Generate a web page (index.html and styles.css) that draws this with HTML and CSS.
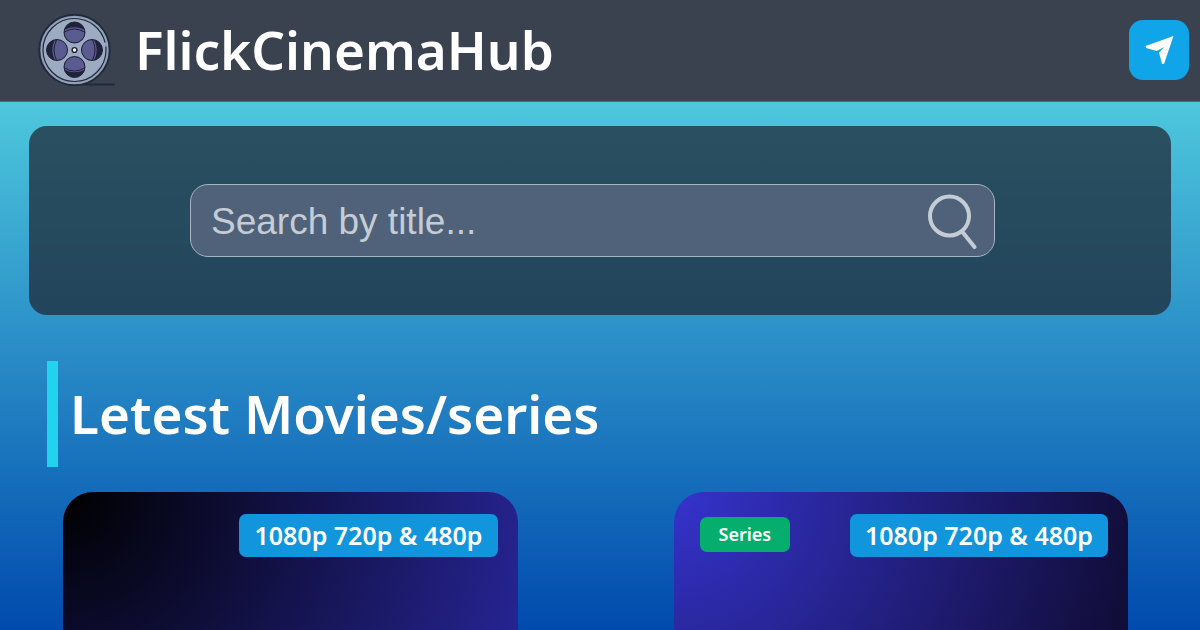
FILE: index.html
```html
<!DOCTYPE html>
<html lang="en">
<head>
<meta charset="utf-8">
<meta name="viewport" content="width=device-width, initial-scale=1">
<title>FlickCinemaHub</title>
<link rel="stylesheet" href="styles.css">
</head>
<body>
<header class="header">
  <div class="brand">
    <svg class="reel" viewBox="0 0 78 74" aria-hidden="true">
      <path d="M44 71.500H76" stroke="#202a3c" stroke-width="2" stroke-linecap="round"/>
      <circle cx="36.500" cy="37" r="35.200" fill="#92a1b7" stroke="#202a3c" stroke-width="2"/>
      <circle cx="36.500" cy="37" r="31.500" fill="#9cabc1" stroke="#202a3c" stroke-width="1.200" stroke-dasharray="190 4 4"/>
      <g fill="#202239"><circle cx="36.500" cy="19.500" r="10.500"/><circle cx="36.500" cy="54" r="10.500"/><circle cx="19" cy="37" r="10.500"/><circle cx="54" cy="37" r="10.500"/></g>
      <g fill="#5a5b91">
        <path d="M27 16.500Q36.500 12 46 16.500A10 10 0 1 1 27 16.500Z"/>
        <path d="M27 57Q36.500 61.500 46 57A10 10 0 1 0 27 57Z"/>
        <path d="M16.500 27.500Q12 37 16.500 46.500A10 10 0 1 0 16.500 27.500Z"/>
        <path d="M56.500 27.500Q61 37 56.500 46.500A10 10 0 1 1 56.500 27.500Z"/>
      </g>
      <g fill="none" stroke="#202239">
        <path d="M26.500 19Q36.500 13 46.500 19M26.500 55Q36.500 61 46.500 55M18.500 27Q13.500 37 18.500 47M54.500 27Q59.500 37 54.500 47"/>
        <circle cx="36.500" cy="19.500" r="10.500"/><circle cx="36.500" cy="54" r="10.500"/><circle cx="19" cy="37" r="10.500"/><circle cx="54" cy="37" r="10.500"/>
      </g>
      <circle cx="36.500" cy="37" r="2.400" fill="#fff" stroke="#202239" stroke-width="1.400"/>
    </svg>
    <h1 class="title">FlickCinemaHub</h1>
  </div>
  <a class="share" href="#" aria-label="Telegram">
    <svg class="plane" viewBox="0 0 60 60" aria-hidden="true"><path d="M44.500 16 16.500 26 17 28 27.500 31 35.500 27 30 32.500 33 44 35 44Z" fill="#fff"/></svg>
  </a>
</header>
<main class="main">
  <form class="panel" role="search">
    <div class="search">
      <input class="field" type="text" placeholder="Search by title..." aria-label="Search by title">
      <button class="go" type="button" aria-label="Search">
        <svg class="lens" viewBox="0 0 50 56" aria-hidden="true"><circle cx="22.500" cy="23" r="19.500"/><path d="M35.500 39 47.500 54"/></svg>
      </button>
    </div>
  </form>
  <h2 class="heading">Letest Movies/series</h2>
  <section class="cards">
    <article class="card card-dark"><span class="quality">1080p 720p &amp; 480p</span></article>
    <article class="card card-violet"><span class="kind">Series</span><span class="quality">1080p 720p &amp; 480p</span></article>
  </section>
</main>
</body>
</html>
```
FILE: styles.css
```css
* { box-sizing: border-box; }
body {
  margin: 0;
  min-height: 100vh;
  background: linear-gradient(#5de0e6, #004aad);
  font-family: "Noto Sans", sans-serif;
  color: #fff;
}
.header {
  display: flex;
  align-items: center;
  justify-content: space-between;
  padding: 13px 11px 14px 38px;
  background: #3a4250;
  border-bottom: 1px solid #46717f;
}
.brand { display: flex; align-items: center; gap: 19px; }
.reel { width: 78px; height: 74px; }
.title { margin: 0; font-size: 53px; line-height: 72px; font-weight: 600; }
.share { width: 60px; height: 60px; border-radius: 14px; background: #10a5e9; }
.plane { display: block; width: 60px; height: 60px; }
.main { padding: 24px 29px 0; }
.panel {
  display: flex;
  justify-content: center;
  padding: 58px 176px 58px 161px;
  border-radius: 18px;
  background: rgba(31, 41, 55, 0.75);
}
.search {
  display: flex;
  flex: 1;
  align-items: center;
  height: 73px;
  padding: 0 17px 0 20px;
  border: 1px solid #a9b3c1;
  border-radius: 18px;
  background: #4f6279;
}
.field {
  flex: 1;
  min-width: 0;
  padding: 2px 0 0;
  border: 0;
  outline: 0;
  background: none;
  color: #c5ccd6;
  font: 37px "Liberation Sans", sans-serif;
}
.field::placeholder { color: #c5ccd6; opacity: 1; }
.go { padding: 0; border: 0; background: none; }
.lens { display: block; width: 50px; height: 56px; fill: none; stroke: #c5ccd6; stroke-width: 4; stroke-linecap: round; }
.heading {
  margin: 46px 18px 25px;
  padding-left: 12px;
  border-left: 11px solid #22d3ee;
  font-size: 53px;
  line-height: 106px;
  font-weight: 600;
}
.cards { display: grid; grid-template-columns: 1fr 1fr; gap: 156px; padding: 0 43px 0 34px; }
.card {
  display: flex;
  align-items: flex-start;
  min-height: 138px;
  padding: 22px 20px 0 26px;
  border-radius: 30px 30px 0 0;
}
.card-dark { background: radial-gradient(circle at 0 0, #000, #262492); }
.card-violet { background: radial-gradient(circle at 0 0, #3533cd, #100c35); }
.quality, .kind { border-radius: 7px; font-weight: 600; }
.quality { margin-left: auto; padding: 0 15px 1px; background: #1195dd; font-size: 25px; line-height: 42px; }
.kind { margin-top: 3px; padding: 0 19px; background: #06ae6d; font-size: 18px; line-height: 35px; }
```
